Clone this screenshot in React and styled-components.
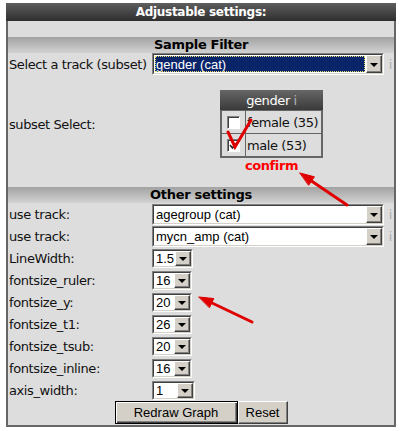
import React from "react";
import styled, { createGlobalStyle } from "styled-components";

const GlobalStyle = createGlobalStyle`
  body {
    margin: 0;
    background: #fff;
  }
`;

const Page = styled.div`
  position: relative;
  width: 401px;
  height: 431px;
  padding-top: 3px;
  box-sizing: border-box;
`;

const Panel = styled.div`
  margin-left: 6px;
  width: 386px;
  border: 2px solid #666;
  border-top: none;
  background: #dddddd;
  font-family: "DejaVu Sans", Verdana, sans-serif;
  font-size: 13px;
  letter-spacing: -0.4px;
  color: #111;
`;

const Title = styled.div`
  height: 18px;
  line-height: 18px;
  margin: 0 -2px;
  background: linear-gradient(#5e5e5e, #2e2e2e);
  color: #fff;
  font-size: 12px;
  font-weight: bold;
  letter-spacing: -0.3px;
  text-align: center;
`;

const Spacer = styled.div`
  height: ${({ $h }) => $h}px;
`;

const SectionTitle = styled.div`
  height: 16px;
  line-height: 16px;
  background: linear-gradient(#a2a2a2, #d2d2d2);
  color: #000;
  font-weight: bold;
  letter-spacing: -0.3px;
  text-align: center;
`;

const Row = styled.div`
  display: grid;
  grid-template-columns: 144px 232px 10px;
  align-items: center;
  height: ${({ $h }) => $h || 22}px;
`;

const Label = styled.div`
  padding-left: 1px;
  white-space: nowrap;
`;

const Info = styled.div`
  color: #adadad;
  text-align: right;
  padding-right: 2px;
`;

const SelectOuter = styled.div`
  width: ${({ $w }) => $w}px;
  height: ${({ $h }) => $h}px;
  box-sizing: border-box;
  border: 1px solid;
  border-color: #808080 #fff #fff #808080;
`;

const SelectInner = styled.div`
  display: flex;
  height: 100%;
  box-sizing: border-box;
  border: 1px solid;
  border-color: #404040 #d4d0c8 #d4d0c8 #404040;
  background: #fff;
`;

const SelectText = styled.div`
  flex: 1;
  display: flex;
  align-items: center;
  padding-left: 2px;
  font-family: "Liberation Sans", Arial, sans-serif;
  font-size: 13px;
  letter-spacing: 0;
  color: #000;
  white-space: nowrap;
  overflow: hidden;
  ${({ $focus }) =>
    $focus &&
    `
    margin: 1px;
    padding-left: 1px;
    background: #0a246a;
    color: #fff;
    outline: 1px dotted #e8e070;
    outline-offset: -1px;
  `}
`;

const ArrowButton = styled.div`
  width: 16px;
  flex: none;
  box-sizing: border-box;
  display: flex;
  align-items: center;
  justify-content: center;
  background: #d4d0c8;
  border: 1px solid;
  border-color: #fff #404040 #404040 #fff;
  box-shadow: inset -1px -1px #808080;

  &::after {
    content: "";
    border-left: 4px solid transparent;
    border-right: 4px solid transparent;
    border-top: 4px solid #000;
    margin-top: 1px;
  }
`;

const Select = ({ value, width = 232, height = 21, focus }) => (
  <SelectOuter $w={width} $h={height}>
    <SelectInner>
      <SelectText $focus={focus}>{value}</SelectText>
      <ArrowButton />
    </SelectInner>
  </SelectOuter>
);

const SubsetCell = styled.div`
  padding-top: 15px;
  padding-left: 68px;
`;

const Chooser = styled.div`
  width: 103px;
  box-sizing: border-box;
  border: 2px solid #666;
  background: #666;
  display: grid;
  grid-template-columns: 23px 1fr;
  gap: 1px;
`;

const ChooserHead = styled.div`
  grid-column: 1 / -1;
  height: 18px;
  line-height: 18px;
  margin: -2px -2px 0;
  padding-top: 2px;
  background: linear-gradient(#666, #3a3a3a);
  color: #fff;
  text-align: center;

  span {
    color: #b5b5b5;
  }
`;

const ChooserCell = styled.div`
  height: 22px;
  display: flex;
  align-items: center;
  justify-content: ${({ $center }) => ($center ? "center" : "flex-start")};
  background: #dddddd;
  padding-left: ${({ $center }) => ($center ? 0 : 1)}px;
  white-space: nowrap;
`;

const CheckBox = styled.div`
  width: 13px;
  height: 13px;
  box-sizing: border-box;
  border: 1px solid;
  border-color: #808080 #fff #fff #808080;
  box-shadow: inset 1px 1px #404040;
  background: #fff;
  display: flex;
  align-items: center;
  justify-content: center;
`;

const Confirm = styled.div`
  width: 103px;
  height: 16px;
  line-height: 16px;
  text-align: center;
  color: #ff0000;
  font-weight: bold;
`;

const ButtonRow = styled.div`
  display: flex;
  justify-content: center;
  height: 24px;
`;

const Button = styled.button`
  height: 23px;
  padding: 0;
  width: ${({ $w }) => $w}px;
  font-family: "Liberation Sans", Arial, sans-serif;
  font-size: 13px;
  letter-spacing: 0;
  color: #000;
  background: #d4d0c8;
  border: 1px solid;
  border-color: #fff #404040 #404040 #fff;
  box-shadow: inset -1px -1px #808080;
  ${({ $primary }) =>
    $primary &&
    `
    border-color: #000;
    box-shadow: inset 1px 1px #fff, inset -1px -1px #404040, inset -2px -2px #808080;
  `}
`;

const Annotations = styled.svg`
  position: absolute;
  left: 0;
  top: 0;
  pointer-events: none;
`;

const Check = () => (
  <svg width="9" height="9" viewBox="0 0 9 9">
    <path d="M1 4 L3.5 7 L8 1.5" fill="none" stroke="#222" strokeWidth="1.6" />
  </svg>
);

const settings = [
  ["LineWidth:", "1.5", 41],
  ["fontsize_ruler:", "16", 40],
  ["fontsize_y:", "20", 40],
  ["fontsize_t1:", "26", 40],
  ["fontsize_tsub:", "20", 40],
  ["fontsize_inline:", "16", 40],
  ["axis_width:", "1", 43],
];

export default function App() {
  return (
    <Page>
      <GlobalStyle />
      <Panel>
        <Title>Adjustable settings:</Title>
        <Spacer $h={16} />
        <SectionTitle>Sample Filter</SectionTitle>
        <Row>
          <Label>Select a track (subset)</Label>
          <Select value="gender (cat)" focus height={22} />
          <Info>i</Info>
        </Row>
        <Row $h={99}>
          <Label>subset Select:</Label>
          <SubsetCell>
            <Chooser>
              <ChooserHead>
                gender <span>i</span>
              </ChooserHead>
              <ChooserCell $center>
                <CheckBox />
              </ChooserCell>
              <ChooserCell>female (35)</ChooserCell>
              <ChooserCell $center>
                <CheckBox>
                  <Check />
                </CheckBox>
              </ChooserCell>
              <ChooserCell>male (53)</ChooserCell>
            </Chooser>
            <Confirm>confirm</Confirm>
          </SubsetCell>
        </Row>
        <Spacer $h={13} />
        <SectionTitle>Other settings</SectionTitle>
        <Row>
          <Label>use track:</Label>
          <Select value="agegroup (cat)" />
          <Info>i</Info>
        </Row>
        <Row>
          <Label>use track:</Label>
          <Select value="mycn_amp (cat)" />
          <Info>i</Info>
        </Row>
        {settings.map(([label, value, w]) => (
          <Row key={label}>
            <Label>{label}</Label>
            <Select value={value} width={w} height={19} />
          </Row>
        ))}
        <ButtonRow>
          <Button $primary $w={123}>
            Redraw Graph
          </Button>
          <Button $w={50}>Reset</Button>
        </ButtonRow>
      </Panel>
      <Annotations width="401" height="431" viewBox="0 0 401 431">
        <g fill="#e00000" stroke="#e00000" strokeLinecap="round">
          <path d="M228 132 L235 147 L251 120" fill="none" strokeWidth="3" />
          <line x1="347" y1="205" x2="310" y2="180" strokeWidth="3" />
          <polygon points="300,173 314.4,176.8 308.8,185" strokeWidth="1" />
          <line x1="252" y1="322" x2="210" y2="302" strokeWidth="3" />
          <polygon points="199,297 213.8,298.5 209.6,307.5" strokeWidth="1" />
        </g>
      </Annotations>
    </Page>
  );
}
